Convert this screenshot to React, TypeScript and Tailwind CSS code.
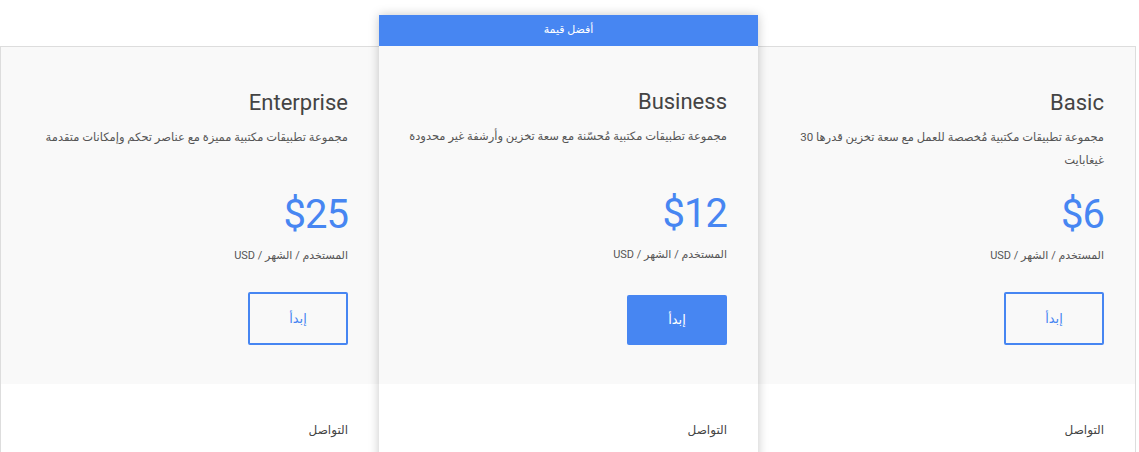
import React from 'react';

type Plan = {
    name: string;
    desc: React.ReactNode;
    price: string;
    featured?: boolean;
};

const plans: Plan[] = [
    {
        name: 'Basic',
        desc: (
            <>
                مجموعة تطبيقات مكتبية مُخصصة للعمل مع سعة تخزين قدرها 30
                <br />
                غيغابايت
            </>
        ),
        price: '$6',
    },
    { name: 'Business', desc: 'مجموعة تطبيقات مكتبية مُحسّنة مع سعة تخزين وأرشفة غير محدودة', price: '$12', featured: true },
    { name: 'Enterprise', desc: 'مجموعة تطبيقات مكتبية مميزة مع عناصر تحكم وإمكانات متقدمة', price: '$25' },
];

const PlanCard = ({ plan, index }: { plan: Plan; index: number }) => {
    const edge = index === 0 ? 'border-r border-t border-[#dddddd] w-[378px]' : 'border-l border-t border-[#dddddd] w-[379px]';

    return (
        <div
            className={
                plan.featured
                    ? 'relative z-10 w-[379px] flex flex-col shadow-[0_0_10px_rgba(0,0,0,0.22)] bg-white'
                    : `relative flex flex-col mt-[31px] bg-white ${edge}`
            }
        >
            {plan.featured && (
                <div className="h-[31px] bg-[#4786f2] text-white text-[11px] flex items-center justify-center">
                    أفضل قيمة
                </div>
            )}

            {/* Top section */}
            <div className={`bg-[#f9f9f9] px-[31px] pt-[39px] ${plan.featured ? 'h-[338px]' : 'h-[337px]'}`}>
                <h2 className="text-[22px] leading-[33px] text-[#444444] font-normal">{plan.name}</h2>
                <p className="mt-[7px] h-[48px] text-[11.5px] leading-[23px] text-[#555555] whitespace-nowrap">{plan.desc}</p>
                <div
                    className="mt-[21px] text-[40px] leading-[40px] tracking-[-1px] text-[#4786f2]"
                    dir="ltr"
                    style={{ textAlign: 'right' }}
                >
                    {plan.price}
                </div>
                <div className="mt-[12px] text-[11px] leading-[18px] text-[#555555]">المستخدم / الشهر / USD</div>
                {plan.featured ? (
                    <button className="mt-[31px] w-[100px] h-[50px] rounded-[2px] bg-[#4786f2] text-white text-[13px]">
                        إبدأ
                    </button>
                ) : (
                    <button className="mt-[27px] w-[100px] h-[53px] rounded-[2px] border-2 border-[#4786f2] text-[#4786f2] text-[13px] bg-transparent">
                        إبدأ
                    </button>
                )}
            </div>

            {/* Bottom section */}
            <div className="px-[31px] pt-[36px] h-[120px] bg-white">
                <div className="text-[12px] leading-[20px] text-[#444444]">التواصل</div>
            </div>
        </div>
    );
};

export default function App() {
    return (
        <div
            className="w-[1139px] h-[452px] overflow-hidden bg-white pt-[15px]"
            style={{ fontFamily: 'Roboto, "DejaVu Sans", sans-serif' }}
        >
            <div dir="rtl" className="w-[1136px] flex items-start">
                {plans.map((plan, i) => (
                    <PlanCard key={plan.name} plan={plan} index={i} />
                ))}
            </div>
        </div>
    );
}
